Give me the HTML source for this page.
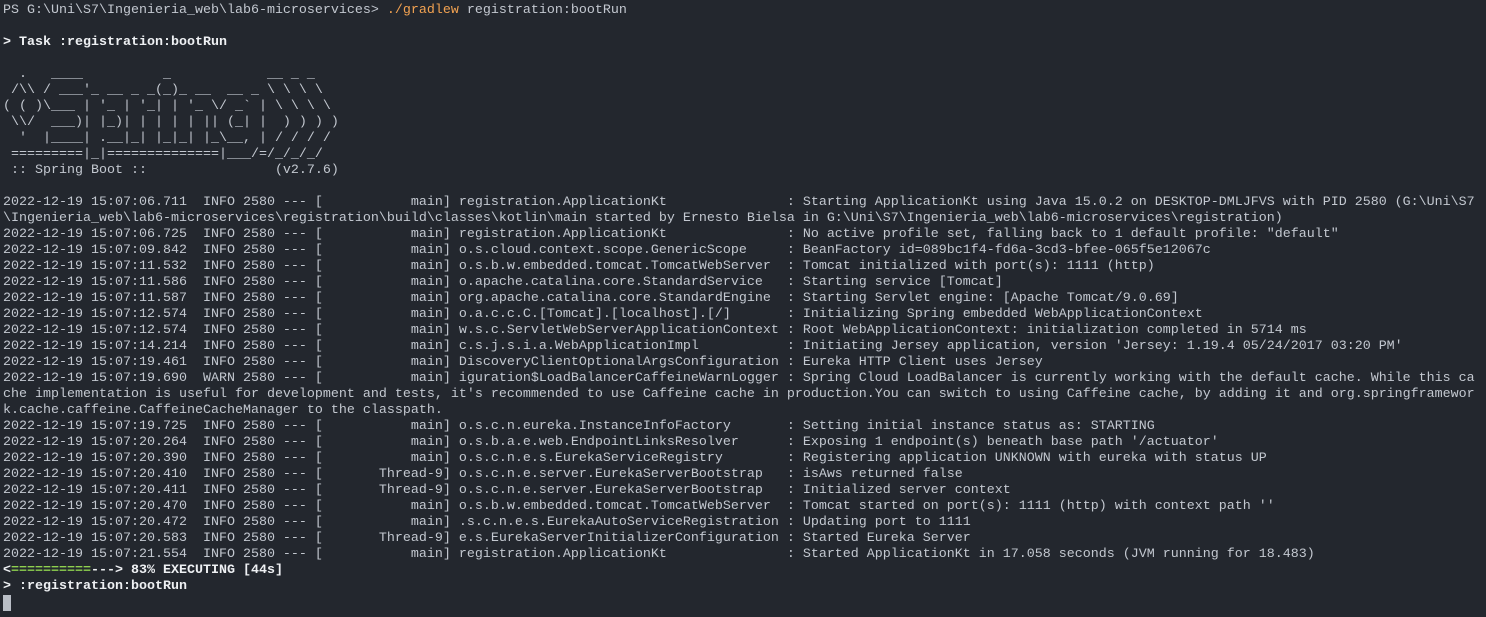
<!DOCTYPE html>
<html><head><meta charset="utf-8"><style>
html,body{margin:0;padding:0;background:#23272e;width:1486px;height:617px;overflow:hidden}
pre{margin:0;padding:3px 0 0 3px;font-family:"Liberation Mono",monospace;font-size:13.333px;line-height:16px;color:#c3c8d0;white-space:pre}
.b{font-weight:bold;color:#eef0f3}
.o{color:#f2a251}
.g{color:#8fd14f;font-weight:bold}
.cur{display:inline-block;width:8px;height:16px;background:#b9bec6;vertical-align:top}
</style></head><body><pre>PS G:\Uni\S7\Ingenieria_web\lab6-microservices&gt; <span class="o">./gradlew</span> registration:bootRun

<span class="b">&gt; Task :registration:bootRun</span>

  .   ____          _            __ _ _
 /\\ / ___'_ __ _ _(_)_ __  __ _ \ \ \ \
( ( )\___ | '_ | '_| | '_ \/ _` | \ \ \ \
 \\/  ___)| |_)| | | | | || (_| |  ) ) ) )
  '  |____| .__|_| |_|_| |_\__, | / / / /
 =========|_|==============|___/=/_/_/_/
 :: Spring Boot ::                (v2.7.6)

2022-12-19 15:07:06.711  INFO 2580 --- [           main] registration.ApplicationKt               : Starting ApplicationKt using Java 15.0.2 on DESKTOP-DMLJFVS with PID 2580 (G:\Uni\S7
\Ingenieria_web\lab6-microservices\registration\build\classes\kotlin\main started by Ernesto Bielsa in G:\Uni\S7\Ingenieria_web\lab6-microservices\registration)
2022-12-19 15:07:06.725  INFO 2580 --- [           main] registration.ApplicationKt               : No active profile set, falling back to 1 default profile: "default"
2022-12-19 15:07:09.842  INFO 2580 --- [           main] o.s.cloud.context.scope.GenericScope     : BeanFactory id=089bc1f4-fd6a-3cd3-bfee-065f5e12067c
2022-12-19 15:07:11.532  INFO 2580 --- [           main] o.s.b.w.embedded.tomcat.TomcatWebServer  : Tomcat initialized with port(s): 1111 (http)
2022-12-19 15:07:11.586  INFO 2580 --- [           main] o.apache.catalina.core.StandardService   : Starting service [Tomcat]
2022-12-19 15:07:11.587  INFO 2580 --- [           main] org.apache.catalina.core.StandardEngine  : Starting Servlet engine: [Apache Tomcat/9.0.69]
2022-12-19 15:07:12.574  INFO 2580 --- [           main] o.a.c.c.C.[Tomcat].[localhost].[/]       : Initializing Spring embedded WebApplicationContext
2022-12-19 15:07:12.574  INFO 2580 --- [           main] w.s.c.ServletWebServerApplicationContext : Root WebApplicationContext: initialization completed in 5714 ms
2022-12-19 15:07:14.214  INFO 2580 --- [           main] c.s.j.s.i.a.WebApplicationImpl           : Initiating Jersey application, version 'Jersey: 1.19.4 05/24/2017 03:20 PM'
2022-12-19 15:07:19.461  INFO 2580 --- [           main] DiscoveryClientOptionalArgsConfiguration : Eureka HTTP Client uses Jersey
2022-12-19 15:07:19.690  WARN 2580 --- [           main] iguration$LoadBalancerCaffeineWarnLogger : Spring Cloud LoadBalancer is currently working with the default cache. While this ca
che implementation is useful for development and tests, it's recommended to use Caffeine cache in production.You can switch to using Caffeine cache, by adding it and org.springframewor
k.cache.caffeine.CaffeineCacheManager to the classpath.
2022-12-19 15:07:19.725  INFO 2580 --- [           main] o.s.c.n.eureka.InstanceInfoFactory       : Setting initial instance status as: STARTING
2022-12-19 15:07:20.264  INFO 2580 --- [           main] o.s.b.a.e.web.EndpointLinksResolver      : Exposing 1 endpoint(s) beneath base path '/actuator'
2022-12-19 15:07:20.390  INFO 2580 --- [           main] o.s.c.n.e.s.EurekaServiceRegistry        : Registering application UNKNOWN with eureka with status UP
2022-12-19 15:07:20.410  INFO 2580 --- [       Thread-9] o.s.c.n.e.server.EurekaServerBootstrap   : isAws returned false
2022-12-19 15:07:20.411  INFO 2580 --- [       Thread-9] o.s.c.n.e.server.EurekaServerBootstrap   : Initialized server context
2022-12-19 15:07:20.470  INFO 2580 --- [           main] o.s.b.w.embedded.tomcat.TomcatWebServer  : Tomcat started on port(s): 1111 (http) with context path ''
2022-12-19 15:07:20.472  INFO 2580 --- [           main] .s.c.n.e.s.EurekaAutoServiceRegistration : Updating port to 1111
2022-12-19 15:07:20.583  INFO 2580 --- [       Thread-9] e.s.EurekaServerInitializerConfiguration : Started Eureka Server
2022-12-19 15:07:21.554  INFO 2580 --- [           main] registration.ApplicationKt               : Started ApplicationKt in 17.058 seconds (JVM running for 18.483)
<span class="b">&lt;</span><span class="g">==========</span><span class="b">---&gt; 83% EXECUTING [44s]</span>
<span class="b">&gt; :registration:bootRun</span>
<span class="cur"></span></pre></body></html>
